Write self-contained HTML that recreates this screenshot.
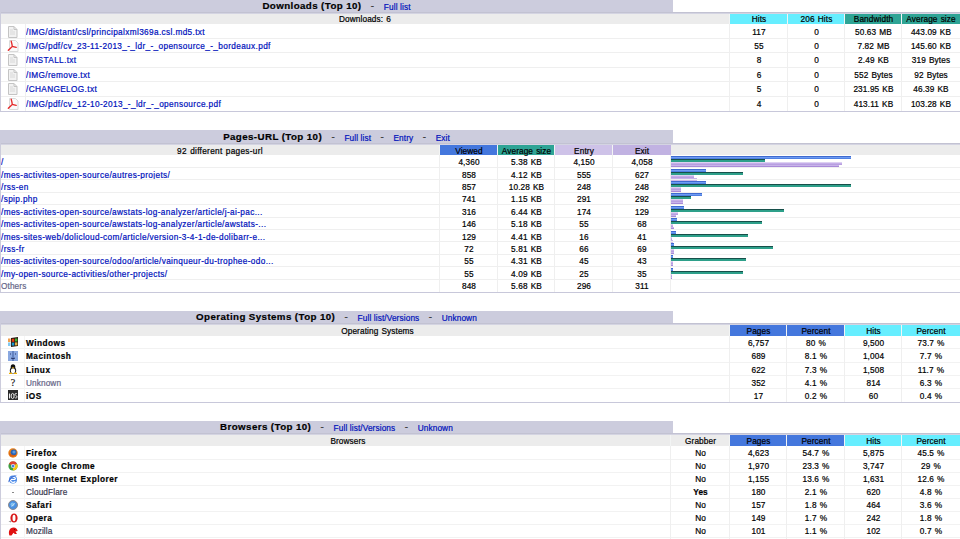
<!DOCTYPE html><html><head><meta charset="utf-8"><style>
html,body{margin:0;padding:0;background:#fff;width:960px;height:539px;overflow:hidden;position:relative;}
body{font-family:"Liberation Sans",sans-serif;font-size:8.25px;color:#000;-webkit-text-stroke:0.2px;}
.r{position:absolute;}
.t{position:absolute;white-space:nowrap;text-align:center;letter-spacing:0.1px;word-spacing:0.7px;}
.p{letter-spacing:0.36px;color:#0011BB;word-spacing:0;}
.b{letter-spacing:0.5px;}
.w{letter-spacing:0.3px;}
.ti{font-size:9.75px;font-weight:bold;letter-spacing:0.4px;word-spacing:0;}
.ti i{font-style:normal;font-weight:normal;color:#333;font-size:9.75px;}
.ti span{font-weight:normal;font-size:8.25px;letter-spacing:0.12px;color:#0011BB;vertical-align:-1px;}
svg{position:absolute;}
</style></head><body>
<div class="r" style="left:0px;top:-1px;width:673px;height:13px;background:#CCCCDD;"></div>
<div class="t ti" style="left:0px;top:-1px;width:673px;height:13px;line-height:13px;">Downloads (Top 10) &nbsp; <i>-</i> &nbsp; <span>Full list</span></div>
<div class="r" style="left:0px;top:12px;width:960px;height:1px;background:#C2C2D2;"></div>
<div class="r" style="left:0px;top:13px;width:960px;height:1px;background:#D4D4E2;"></div>
<div class="r" style="left:1px;top:14px;width:959px;height:10px;background:#ECECEC;"></div>
<div class="r" style="left:730px;top:14px;width:58px;height:10px;background:#66EEFF;"></div>
<div class="t" style="left:730px;top:15.0px;width:58px;height:10px;line-height:10px;">Hits</div>
<div class="r" style="left:788px;top:14px;width:57px;height:10px;background:#66EEFF;"></div>
<div class="t" style="left:788px;top:15.0px;width:57px;height:10px;line-height:10px;">206 Hits</div>
<div class="r" style="left:845px;top:14px;width:57px;height:10px;background:#2EA495;"></div>
<div class="t" style="left:845px;top:15.0px;width:57px;height:10px;line-height:10px;">Bandwidth</div>
<div class="r" style="left:902px;top:14px;width:58px;height:10px;background:#2EA495;"></div>
<div class="t" style="left:902px;top:15.0px;width:58px;height:10px;line-height:10px;">Average size</div>
<div class="r" style="left:729px;top:14px;width:1px;height:10px;background:#F2F4F4;"></div>
<div class="r" style="left:787px;top:14px;width:1px;height:10px;background:#F2F4F4;"></div>
<div class="r" style="left:844px;top:14px;width:1px;height:10px;background:#F2F4F4;"></div>
<div class="r" style="left:901px;top:14px;width:1px;height:10px;background:#F2F4F4;"></div>
<div class="t" style="left:0px;top:15.0px;width:730px;height:10px;line-height:10px;">Downloads: 6</div>
<svg style="left:7px;top:26px" width="11" height="12" viewBox="0 0 11 12"><path d="M1.5 0.5h5.5l3 3v8h-8.5z" fill="#f2f2f2" stroke="#c4c4c4"/><path d="M7 0.5v3h3" fill="none" stroke="#c4c4c4"/><path d="M3 4h3M3 6h5M3 8h5" stroke="#d8d8d8"/></svg>
<div class="t p" style="left:26px;top:25.5px;width:674px;height:14.45px;line-height:14.45px;text-align:left;">/IMG/distant/csl/principalxml369a.csl.md5.txt</div>
<div class="t" style="left:730px;top:25.5px;width:58px;height:14.45px;line-height:14.45px;">117</div>
<div class="t" style="left:788px;top:25.5px;width:57px;height:14.45px;line-height:14.45px;">0</div>
<div class="t" style="left:845px;top:25.5px;width:57px;height:14.45px;line-height:14.45px;">50.63 MB</div>
<div class="t" style="left:902px;top:25.5px;width:58px;height:14.45px;line-height:14.45px;">443.09 KB</div>
<div class="r" style="left:1px;top:37.95px;width:959px;height:1px;background:#EFEFEF;"></div>
<svg style="left:7px;top:40px" width="12" height="12" viewBox="0 0 12 12"><path d="M2.5 0.5h6l2.5 2.5v8.5h-8.5z" fill="#fafafa" stroke="#dadada"/><path d="M4.2 1.2Q5 4 5.3 6.4Q3.6 8.2 1.3 10.3M5.3 6.4Q7 7 9.2 7.4" stroke="#e42828" stroke-width="1.3" fill="none" stroke-linecap="round"/></svg>
<div class="t p" style="left:26px;top:39.95px;width:674px;height:14.45px;line-height:14.45px;text-align:left;">/IMG/pdf/cv_23-11-2013_-_ldr_-_opensource_-_bordeaux.pdf</div>
<div class="t" style="left:730px;top:39.95px;width:58px;height:14.45px;line-height:14.45px;">55</div>
<div class="t" style="left:788px;top:39.95px;width:57px;height:14.45px;line-height:14.45px;">0</div>
<div class="t" style="left:845px;top:39.95px;width:57px;height:14.45px;line-height:14.45px;">7.82 MB</div>
<div class="t" style="left:902px;top:39.95px;width:58px;height:14.45px;line-height:14.45px;">145.60 KB</div>
<div class="r" style="left:1px;top:52.400000000000006px;width:959px;height:1px;background:#EFEFEF;"></div>
<svg style="left:7px;top:54px" width="11" height="12" viewBox="0 0 11 12"><path d="M1.5 0.5h5.5l3 3v8h-8.5z" fill="#f2f2f2" stroke="#c4c4c4"/><path d="M7 0.5v3h3" fill="none" stroke="#c4c4c4"/><path d="M3 4h3M3 6h5M3 8h5" stroke="#d8d8d8"/></svg>
<div class="t p" style="left:26px;top:54.4px;width:674px;height:14.45px;line-height:14.45px;text-align:left;">/INSTALL.txt</div>
<div class="t" style="left:730px;top:54.4px;width:58px;height:14.45px;line-height:14.45px;">8</div>
<div class="t" style="left:788px;top:54.4px;width:57px;height:14.45px;line-height:14.45px;">0</div>
<div class="t" style="left:845px;top:54.4px;width:57px;height:14.45px;line-height:14.45px;">2.49 KB</div>
<div class="t" style="left:902px;top:54.4px;width:58px;height:14.45px;line-height:14.45px;">319 Bytes</div>
<div class="r" style="left:1px;top:66.85px;width:959px;height:1px;background:#EFEFEF;"></div>
<svg style="left:7px;top:69px" width="11" height="12" viewBox="0 0 11 12"><path d="M1.5 0.5h5.5l3 3v8h-8.5z" fill="#f2f2f2" stroke="#c4c4c4"/><path d="M7 0.5v3h3" fill="none" stroke="#c4c4c4"/><path d="M3 4h3M3 6h5M3 8h5" stroke="#d8d8d8"/></svg>
<div class="t p" style="left:26px;top:68.85px;width:674px;height:14.45px;line-height:14.45px;text-align:left;">/IMG/remove.txt</div>
<div class="t" style="left:730px;top:68.85px;width:58px;height:14.45px;line-height:14.45px;">6</div>
<div class="t" style="left:788px;top:68.85px;width:57px;height:14.45px;line-height:14.45px;">0</div>
<div class="t" style="left:845px;top:68.85px;width:57px;height:14.45px;line-height:14.45px;">552 Bytes</div>
<div class="t" style="left:902px;top:68.85px;width:58px;height:14.45px;line-height:14.45px;">92 Bytes</div>
<div class="r" style="left:1px;top:81.3px;width:959px;height:1px;background:#EFEFEF;"></div>
<svg style="left:7px;top:83px" width="11" height="12" viewBox="0 0 11 12"><path d="M1.5 0.5h5.5l3 3v8h-8.5z" fill="#f2f2f2" stroke="#c4c4c4"/><path d="M7 0.5v3h3" fill="none" stroke="#c4c4c4"/><path d="M3 4h3M3 6h5M3 8h5" stroke="#d8d8d8"/></svg>
<div class="t p" style="left:26px;top:83.3px;width:674px;height:14.45px;line-height:14.45px;text-align:left;">/CHANGELOG.txt</div>
<div class="t" style="left:730px;top:83.3px;width:58px;height:14.45px;line-height:14.45px;">5</div>
<div class="t" style="left:788px;top:83.3px;width:57px;height:14.45px;line-height:14.45px;">0</div>
<div class="t" style="left:845px;top:83.3px;width:57px;height:14.45px;line-height:14.45px;">231.95 KB</div>
<div class="t" style="left:902px;top:83.3px;width:58px;height:14.45px;line-height:14.45px;">46.39 KB</div>
<div class="r" style="left:1px;top:95.75px;width:959px;height:1px;background:#EFEFEF;"></div>
<svg style="left:7px;top:98px" width="12" height="12" viewBox="0 0 12 12"><path d="M2.5 0.5h6l2.5 2.5v8.5h-8.5z" fill="#fafafa" stroke="#dadada"/><path d="M4.2 1.2Q5 4 5.3 6.4Q3.6 8.2 1.3 10.3M5.3 6.4Q7 7 9.2 7.4" stroke="#e42828" stroke-width="1.3" fill="none" stroke-linecap="round"/></svg>
<div class="t p" style="left:26px;top:97.75px;width:674px;height:14.45px;line-height:14.45px;text-align:left;">/IMG/pdf/cv_12-10-2013_-_ldr_-_opensource.pdf</div>
<div class="t" style="left:730px;top:97.75px;width:58px;height:14.45px;line-height:14.45px;">4</div>
<div class="t" style="left:788px;top:97.75px;width:57px;height:14.45px;line-height:14.45px;">0</div>
<div class="t" style="left:845px;top:97.75px;width:57px;height:14.45px;line-height:14.45px;">413.11 KB</div>
<div class="t" style="left:902px;top:97.75px;width:58px;height:14.45px;line-height:14.45px;">103.28 KB</div>
<div class="r" style="left:729px;top:24px;width:1px;height:87px;background:#EFEFEF;"></div>
<div class="r" style="left:787px;top:24px;width:1px;height:87px;background:#EFEFEF;"></div>
<div class="r" style="left:844px;top:24px;width:1px;height:87px;background:#EFEFEF;"></div>
<div class="r" style="left:901px;top:24px;width:1px;height:87px;background:#EFEFEF;"></div>
<div class="r" style="left:25px;top:24px;width:1px;height:87px;background:#EFEFEF;"></div>
<div class="r" style="left:0px;top:12px;width:1px;height:99px;background:#CCCCDC;"></div>
<div class="r" style="left:0px;top:111px;width:960px;height:1px;background:#C8C8DA;"></div>
<div class="r" style="left:0px;top:130.4px;width:673px;height:12.900000000000006px;background:#CCCCDD;"></div>
<div class="t ti" style="left:0px;top:131.2px;width:673px;height:12.900000000000006px;line-height:12.900000000000006px;">Pages-URL (Top 10) &nbsp; <i>-</i> &nbsp; <span>Full list</span> &nbsp; <i>-</i> &nbsp; <span>Entry</span> &nbsp; <i>-</i> &nbsp; <span>Exit</span></div>
<div class="r" style="left:0px;top:143.3px;width:960px;height:1px;background:#C2C2D2;"></div>
<div class="r" style="left:0px;top:144.3px;width:960px;height:0.6999999999999886px;background:#D4D4E2;"></div>
<div class="r" style="left:1px;top:145px;width:959px;height:10.099999999999994px;background:#ECECEC;"></div>
<div class="r" style="left:440px;top:145px;width:58px;height:10.099999999999994px;background:#4477DD;"></div>
<div class="t" style="left:440px;top:146.5px;width:58px;height:10.099999999999994px;line-height:10.099999999999994px;">Viewed</div>
<div class="r" style="left:498px;top:145px;width:57px;height:10.099999999999994px;background:#2EA495;"></div>
<div class="t" style="left:498px;top:146.5px;width:57px;height:10.099999999999994px;line-height:10.099999999999994px;">Average size</div>
<div class="r" style="left:555px;top:145px;width:58px;height:10.099999999999994px;background:#CEC2E8;"></div>
<div class="t" style="left:555px;top:146.5px;width:58px;height:10.099999999999994px;line-height:10.099999999999994px;">Entry</div>
<div class="r" style="left:613px;top:145px;width:58px;height:10.099999999999994px;background:#C1B2E2;"></div>
<div class="t" style="left:613px;top:146.5px;width:58px;height:10.099999999999994px;line-height:10.099999999999994px;">Exit</div>
<div class="r" style="left:439px;top:145px;width:1px;height:10.099999999999994px;background:#F2F4F4;"></div>
<div class="r" style="left:497px;top:145px;width:1px;height:10.099999999999994px;background:#F2F4F4;"></div>
<div class="r" style="left:554px;top:145px;width:1px;height:10.099999999999994px;background:#F2F4F4;"></div>
<div class="r" style="left:612px;top:145px;width:1px;height:10.099999999999994px;background:#F2F4F4;"></div>
<div class="t w" style="left:0px;top:146.5px;width:440px;height:10.099999999999994px;line-height:10.099999999999994px;">92 different pages-url</div>
<div class="t p" style="left:1px;top:157.1px;width:439px;height:12.41px;line-height:12.41px;text-align:left;">/</div>
<div class="t" style="left:440px;top:157.1px;width:58px;height:12.41px;line-height:12.41px;">4,360</div>
<div class="t" style="left:498px;top:157.1px;width:57px;height:12.41px;line-height:12.41px;">5.38 KB</div>
<div class="t" style="left:555px;top:157.1px;width:58px;height:12.41px;line-height:12.41px;">4,150</div>
<div class="t" style="left:613px;top:157.1px;width:58px;height:12.41px;line-height:12.41px;">4,058</div>
<div class="r" style="left:671px;top:156px;width:180px;height:3px;background:linear-gradient(#3f6ad0 0,#3f6ad0 1px,#6e9cf2 1px,#6e9cf2 2px,#4f80e2 2px);"></div>
<div class="r" style="left:671px;top:159px;width:94px;height:3px;background:linear-gradient(#17504a 0,#17504a 1px,#2ea08a 1px);"></div>
<div class="r" style="left:671px;top:162px;width:171px;height:3px;background:linear-gradient(#ddd0f2 0,#ddd0f2 1px,#c4aee8 1px,#c4aee8 2px,#b89fe0 2px);"></div>
<div class="r" style="left:671px;top:165px;width:168px;height:3px;background:linear-gradient(#c8b4ea 0,#c8b4ea 1px,#a98ad8 1px,#a98ad8 2px,#cdbbea 2px);"></div>
<div class="r" style="left:1px;top:167.01px;width:959px;height:1px;background:#EFEFEF;"></div>
<div class="t p" style="left:1px;top:169.51px;width:439px;height:12.41px;line-height:12.41px;text-align:left;">/mes-activites-open-source/autres-projets/</div>
<div class="t" style="left:440px;top:169.51px;width:58px;height:12.41px;line-height:12.41px;">858</div>
<div class="t" style="left:498px;top:169.51px;width:57px;height:12.41px;line-height:12.41px;">4.12 KB</div>
<div class="t" style="left:555px;top:169.51px;width:58px;height:12.41px;line-height:12.41px;">555</div>
<div class="t" style="left:613px;top:169.51px;width:58px;height:12.41px;line-height:12.41px;">627</div>
<div class="r" style="left:671px;top:169px;width:35px;height:3px;background:linear-gradient(#3f6ad0 0,#3f6ad0 1px,#6e9cf2 1px,#6e9cf2 2px,#4f80e2 2px);"></div>
<div class="r" style="left:671px;top:172px;width:72px;height:3px;background:linear-gradient(#17504a 0,#17504a 1px,#2ea08a 1px);"></div>
<div class="r" style="left:671px;top:175px;width:23px;height:3px;background:linear-gradient(#ddd0f2 0,#ddd0f2 1px,#c4aee8 1px,#c4aee8 2px,#b89fe0 2px);"></div>
<div class="r" style="left:671px;top:178px;width:26px;height:3px;background:linear-gradient(#c8b4ea 0,#c8b4ea 1px,#a98ad8 1px,#a98ad8 2px,#cdbbea 2px);"></div>
<div class="r" style="left:1px;top:179.42px;width:959px;height:1px;background:#EFEFEF;"></div>
<div class="t p" style="left:1px;top:181.92px;width:439px;height:12.41px;line-height:12.41px;text-align:left;">/rss-en</div>
<div class="t" style="left:440px;top:181.92px;width:58px;height:12.41px;line-height:12.41px;">857</div>
<div class="t" style="left:498px;top:181.92px;width:57px;height:12.41px;line-height:12.41px;">10.28 KB</div>
<div class="t" style="left:555px;top:181.92px;width:58px;height:12.41px;line-height:12.41px;">248</div>
<div class="t" style="left:613px;top:181.92px;width:58px;height:12.41px;line-height:12.41px;">248</div>
<div class="r" style="left:671px;top:181px;width:35px;height:3px;background:linear-gradient(#3f6ad0 0,#3f6ad0 1px,#6e9cf2 1px,#6e9cf2 2px,#4f80e2 2px);"></div>
<div class="r" style="left:671px;top:184px;width:180px;height:3px;background:linear-gradient(#17504a 0,#17504a 1px,#2ea08a 1px);"></div>
<div class="r" style="left:671px;top:187px;width:10px;height:3px;background:linear-gradient(#ddd0f2 0,#ddd0f2 1px,#c4aee8 1px,#c4aee8 2px,#b89fe0 2px);"></div>
<div class="r" style="left:671px;top:190px;width:10px;height:3px;background:linear-gradient(#c8b4ea 0,#c8b4ea 1px,#a98ad8 1px,#a98ad8 2px,#cdbbea 2px);"></div>
<div class="r" style="left:1px;top:191.82999999999998px;width:959px;height:1px;background:#EFEFEF;"></div>
<div class="t p" style="left:1px;top:194.33px;width:439px;height:12.41px;line-height:12.41px;text-align:left;">/spip.php</div>
<div class="t" style="left:440px;top:194.33px;width:58px;height:12.41px;line-height:12.41px;">741</div>
<div class="t" style="left:498px;top:194.33px;width:57px;height:12.41px;line-height:12.41px;">1.15 KB</div>
<div class="t" style="left:555px;top:194.33px;width:58px;height:12.41px;line-height:12.41px;">291</div>
<div class="t" style="left:613px;top:194.33px;width:58px;height:12.41px;line-height:12.41px;">292</div>
<div class="r" style="left:671px;top:193px;width:31px;height:3px;background:linear-gradient(#3f6ad0 0,#3f6ad0 1px,#6e9cf2 1px,#6e9cf2 2px,#4f80e2 2px);"></div>
<div class="r" style="left:671px;top:196px;width:20px;height:3px;background:linear-gradient(#17504a 0,#17504a 1px,#2ea08a 1px);"></div>
<div class="r" style="left:671px;top:199px;width:12px;height:3px;background:linear-gradient(#ddd0f2 0,#ddd0f2 1px,#c4aee8 1px,#c4aee8 2px,#b89fe0 2px);"></div>
<div class="r" style="left:671px;top:202px;width:12px;height:3px;background:linear-gradient(#c8b4ea 0,#c8b4ea 1px,#a98ad8 1px,#a98ad8 2px,#cdbbea 2px);"></div>
<div class="r" style="left:1px;top:204.23999999999998px;width:959px;height:1px;background:#EFEFEF;"></div>
<div class="t p" style="left:1px;top:206.74px;width:439px;height:12.41px;line-height:12.41px;text-align:left;">/mes-activites-open-source/awstats-log-analyzer/article/j-ai-pac...</div>
<div class="t" style="left:440px;top:206.74px;width:58px;height:12.41px;line-height:12.41px;">316</div>
<div class="t" style="left:498px;top:206.74px;width:57px;height:12.41px;line-height:12.41px;">6.44 KB</div>
<div class="t" style="left:555px;top:206.74px;width:58px;height:12.41px;line-height:12.41px;">174</div>
<div class="t" style="left:613px;top:206.74px;width:58px;height:12.41px;line-height:12.41px;">129</div>
<div class="r" style="left:671px;top:206px;width:13px;height:3px;background:linear-gradient(#3f6ad0 0,#3f6ad0 1px,#6e9cf2 1px,#6e9cf2 2px,#4f80e2 2px);"></div>
<div class="r" style="left:671px;top:209px;width:113px;height:3px;background:linear-gradient(#17504a 0,#17504a 1px,#2ea08a 1px);"></div>
<div class="r" style="left:671px;top:212px;width:7px;height:3px;background:linear-gradient(#ddd0f2 0,#ddd0f2 1px,#c4aee8 1px,#c4aee8 2px,#b89fe0 2px);"></div>
<div class="r" style="left:671px;top:215px;width:5px;height:3px;background:linear-gradient(#c8b4ea 0,#c8b4ea 1px,#a98ad8 1px,#a98ad8 2px,#cdbbea 2px);"></div>
<div class="r" style="left:1px;top:216.65px;width:959px;height:1px;background:#EFEFEF;"></div>
<div class="t p" style="left:1px;top:219.15px;width:439px;height:12.41px;line-height:12.41px;text-align:left;">/mes-activites-open-source/awstats-log-analyzer/article/awstats-...</div>
<div class="t" style="left:440px;top:219.15px;width:58px;height:12.41px;line-height:12.41px;">146</div>
<div class="t" style="left:498px;top:219.15px;width:57px;height:12.41px;line-height:12.41px;">5.18 KB</div>
<div class="t" style="left:555px;top:219.15px;width:58px;height:12.41px;line-height:12.41px;">55</div>
<div class="t" style="left:613px;top:219.15px;width:58px;height:12.41px;line-height:12.41px;">68</div>
<div class="r" style="left:671px;top:218px;width:6px;height:3px;background:linear-gradient(#3f6ad0 0,#3f6ad0 1px,#6e9cf2 1px,#6e9cf2 2px,#4f80e2 2px);"></div>
<div class="r" style="left:671px;top:221px;width:91px;height:3px;background:linear-gradient(#17504a 0,#17504a 1px,#2ea08a 1px);"></div>
<div class="r" style="left:671px;top:224px;width:2px;height:3px;background:linear-gradient(#ddd0f2 0,#ddd0f2 1px,#c4aee8 1px,#c4aee8 2px,#b89fe0 2px);"></div>
<div class="r" style="left:671px;top:227px;width:3px;height:3px;background:linear-gradient(#c8b4ea 0,#c8b4ea 1px,#a98ad8 1px,#a98ad8 2px,#cdbbea 2px);"></div>
<div class="r" style="left:1px;top:229.05999999999997px;width:959px;height:1px;background:#EFEFEF;"></div>
<div class="t p" style="left:1px;top:231.56px;width:439px;height:12.41px;line-height:12.41px;text-align:left;">/mes-sites-web/dolicloud-com/article/version-3-4-1-de-dolibarr-e...</div>
<div class="t" style="left:440px;top:231.56px;width:58px;height:12.41px;line-height:12.41px;">129</div>
<div class="t" style="left:498px;top:231.56px;width:57px;height:12.41px;line-height:12.41px;">4.41 KB</div>
<div class="t" style="left:555px;top:231.56px;width:58px;height:12.41px;line-height:12.41px;">16</div>
<div class="t" style="left:613px;top:231.56px;width:58px;height:12.41px;line-height:12.41px;">41</div>
<div class="r" style="left:671px;top:231px;width:5px;height:3px;background:linear-gradient(#3f6ad0 0,#3f6ad0 1px,#6e9cf2 1px,#6e9cf2 2px,#4f80e2 2px);"></div>
<div class="r" style="left:671px;top:234px;width:77px;height:3px;background:linear-gradient(#17504a 0,#17504a 1px,#2ea08a 1px);"></div>
<div class="r" style="left:671px;top:237px;width:1px;height:3px;background:linear-gradient(#ddd0f2 0,#ddd0f2 1px,#c4aee8 1px,#c4aee8 2px,#b89fe0 2px);"></div>
<div class="r" style="left:671px;top:240px;width:2px;height:3px;background:linear-gradient(#c8b4ea 0,#c8b4ea 1px,#a98ad8 1px,#a98ad8 2px,#cdbbea 2px);"></div>
<div class="r" style="left:1px;top:241.47px;width:959px;height:1px;background:#EFEFEF;"></div>
<div class="t p" style="left:1px;top:243.97px;width:439px;height:12.41px;line-height:12.41px;text-align:left;">/rss-fr</div>
<div class="t" style="left:440px;top:243.97px;width:58px;height:12.41px;line-height:12.41px;">72</div>
<div class="t" style="left:498px;top:243.97px;width:57px;height:12.41px;line-height:12.41px;">5.81 KB</div>
<div class="t" style="left:555px;top:243.97px;width:58px;height:12.41px;line-height:12.41px;">66</div>
<div class="t" style="left:613px;top:243.97px;width:58px;height:12.41px;line-height:12.41px;">69</div>
<div class="r" style="left:671px;top:243px;width:3px;height:3px;background:linear-gradient(#3f6ad0 0,#3f6ad0 1px,#6e9cf2 1px,#6e9cf2 2px,#4f80e2 2px);"></div>
<div class="r" style="left:671px;top:246px;width:102px;height:3px;background:linear-gradient(#17504a 0,#17504a 1px,#2ea08a 1px);"></div>
<div class="r" style="left:671px;top:249px;width:3px;height:3px;background:linear-gradient(#ddd0f2 0,#ddd0f2 1px,#c4aee8 1px,#c4aee8 2px,#b89fe0 2px);"></div>
<div class="r" style="left:671px;top:252px;width:3px;height:3px;background:linear-gradient(#c8b4ea 0,#c8b4ea 1px,#a98ad8 1px,#a98ad8 2px,#cdbbea 2px);"></div>
<div class="r" style="left:1px;top:253.88px;width:959px;height:1px;background:#EFEFEF;"></div>
<div class="t p" style="left:1px;top:256.38px;width:439px;height:12.41px;line-height:12.41px;text-align:left;">/mes-activites-open-source/odoo/article/vainqueur-du-trophee-odo...</div>
<div class="t" style="left:440px;top:256.38px;width:58px;height:12.41px;line-height:12.41px;">55</div>
<div class="t" style="left:498px;top:256.38px;width:57px;height:12.41px;line-height:12.41px;">4.31 KB</div>
<div class="t" style="left:555px;top:256.38px;width:58px;height:12.41px;line-height:12.41px;">45</div>
<div class="t" style="left:613px;top:256.38px;width:58px;height:12.41px;line-height:12.41px;">43</div>
<div class="r" style="left:671px;top:255px;width:2px;height:3px;background:linear-gradient(#3f6ad0 0,#3f6ad0 1px,#6e9cf2 1px,#6e9cf2 2px,#4f80e2 2px);"></div>
<div class="r" style="left:671px;top:258px;width:75px;height:3px;background:linear-gradient(#17504a 0,#17504a 1px,#2ea08a 1px);"></div>
<div class="r" style="left:671px;top:261px;width:2px;height:3px;background:linear-gradient(#ddd0f2 0,#ddd0f2 1px,#c4aee8 1px,#c4aee8 2px,#b89fe0 2px);"></div>
<div class="r" style="left:671px;top:264px;width:2px;height:3px;background:linear-gradient(#c8b4ea 0,#c8b4ea 1px,#a98ad8 1px,#a98ad8 2px,#cdbbea 2px);"></div>
<div class="r" style="left:1px;top:266.29px;width:959px;height:1px;background:#EFEFEF;"></div>
<div class="t p" style="left:1px;top:268.79px;width:439px;height:12.41px;line-height:12.41px;text-align:left;">/my-open-source-activities/other-projects/</div>
<div class="t" style="left:440px;top:268.79px;width:58px;height:12.41px;line-height:12.41px;">55</div>
<div class="t" style="left:498px;top:268.79px;width:57px;height:12.41px;line-height:12.41px;">4.09 KB</div>
<div class="t" style="left:555px;top:268.79px;width:58px;height:12.41px;line-height:12.41px;">25</div>
<div class="t" style="left:613px;top:268.79px;width:58px;height:12.41px;line-height:12.41px;">35</div>
<div class="r" style="left:671px;top:268px;width:2px;height:3px;background:linear-gradient(#3f6ad0 0,#3f6ad0 1px,#6e9cf2 1px,#6e9cf2 2px,#4f80e2 2px);"></div>
<div class="r" style="left:671px;top:271px;width:72px;height:3px;background:linear-gradient(#17504a 0,#17504a 1px,#2ea08a 1px);"></div>
<div class="r" style="left:671px;top:274px;width:1px;height:3px;background:linear-gradient(#ddd0f2 0,#ddd0f2 1px,#c4aee8 1px,#c4aee8 2px,#b89fe0 2px);"></div>
<div class="r" style="left:671px;top:277px;width:1px;height:3px;background:linear-gradient(#c8b4ea 0,#c8b4ea 1px,#a98ad8 1px,#a98ad8 2px,#cdbbea 2px);"></div>
<div class="r" style="left:1px;top:278.7px;width:959px;height:1px;background:#EFEFEF;"></div>
<div class="t" style="left:1px;top:281.2px;width:439px;height:12.41px;line-height:12.41px;text-align:left;color:#666688;">Others</div>
<div class="t" style="left:440px;top:281.2px;width:58px;height:12.41px;line-height:12.41px;">848</div>
<div class="t" style="left:498px;top:281.2px;width:57px;height:12.41px;line-height:12.41px;">5.68 KB</div>
<div class="t" style="left:555px;top:281.2px;width:58px;height:12.41px;line-height:12.41px;">296</div>
<div class="t" style="left:613px;top:281.2px;width:58px;height:12.41px;line-height:12.41px;">311</div>
<div class="r" style="left:439px;top:155.1px;width:1px;height:136.50000000000003px;background:#EFEFEF;"></div>
<div class="r" style="left:497px;top:155.1px;width:1px;height:136.50000000000003px;background:#EFEFEF;"></div>
<div class="r" style="left:554px;top:155.1px;width:1px;height:136.50000000000003px;background:#EFEFEF;"></div>
<div class="r" style="left:612px;top:155.1px;width:1px;height:136.50000000000003px;background:#EFEFEF;"></div>
<div class="r" style="left:670px;top:155.1px;width:1px;height:136.50000000000003px;background:#EFEFEF;"></div>
<div class="r" style="left:0px;top:143.3px;width:1px;height:148.3px;background:#CCCCDC;"></div>
<div class="r" style="left:0px;top:291.6px;width:960px;height:1px;background:#C8C8DA;"></div>
<div class="r" style="left:0px;top:311px;width:673px;height:12.300000000000011px;background:#CCCCDD;"></div>
<div class="t ti" style="left:0px;top:311px;width:673px;height:12.300000000000011px;line-height:12.300000000000011px;">Operating Systems (Top 10) &nbsp; <i>-</i> &nbsp; <span>Full list/Versions</span> &nbsp; <i>-</i> &nbsp; <span>Unknown</span></div>
<div class="r" style="left:0px;top:323.3px;width:960px;height:1px;background:#C2C2D2;"></div>
<div class="r" style="left:0px;top:324.3px;width:960px;height:1.0px;background:#D4D4E2;"></div>
<div class="r" style="left:1px;top:325.3px;width:959px;height:10.300000000000011px;background:#ECECEC;"></div>
<div class="r" style="left:730px;top:325.3px;width:57px;height:10.300000000000011px;background:#4477DD;"></div>
<div class="t" style="left:730px;top:326.6px;width:57px;height:10.300000000000011px;line-height:10.300000000000011px;">Pages</div>
<div class="r" style="left:787px;top:325.3px;width:58px;height:10.300000000000011px;background:#4477DD;"></div>
<div class="t" style="left:787px;top:326.6px;width:58px;height:10.300000000000011px;line-height:10.300000000000011px;">Percent</div>
<div class="r" style="left:845px;top:325.3px;width:57px;height:10.300000000000011px;background:#66EEFF;"></div>
<div class="t" style="left:845px;top:326.6px;width:57px;height:10.300000000000011px;line-height:10.300000000000011px;">Hits</div>
<div class="r" style="left:902px;top:325.3px;width:58px;height:10.300000000000011px;background:#66EEFF;"></div>
<div class="t" style="left:902px;top:326.6px;width:58px;height:10.300000000000011px;line-height:10.300000000000011px;">Percent</div>
<div class="r" style="left:729px;top:325.3px;width:1px;height:10.300000000000011px;background:#F2F4F4;"></div>
<div class="r" style="left:786px;top:325.3px;width:1px;height:10.300000000000011px;background:#F2F4F4;"></div>
<div class="r" style="left:844px;top:325.3px;width:1px;height:10.300000000000011px;background:#F2F4F4;"></div>
<div class="r" style="left:901px;top:325.3px;width:1px;height:10.300000000000011px;background:#F2F4F4;"></div>
<div class="t" style="left:25px;top:326.6px;width:705px;height:10.300000000000011px;line-height:10.300000000000011px;">Operating Systems</div>
<div class="t b" style="left:26px;top:337.2px;width:674px;height:13.2px;line-height:13.2px;text-align:left;font-weight:bold;">Windows</div>
<div class="t" style="left:730px;top:337.2px;width:57px;height:13.2px;line-height:13.2px;">6,757</div>
<div class="t" style="left:787px;top:337.2px;width:58px;height:13.2px;line-height:13.2px;">80 %</div>
<div class="t" style="left:845px;top:337.2px;width:57px;height:13.2px;line-height:13.2px;">9,500</div>
<div class="t" style="left:902px;top:337.2px;width:58px;height:13.2px;line-height:13.2px;">73.7 %</div>
<svg style="left:8px;top:337px" width="10" height="10" viewBox="0 0 10 10"><path d="M3 1L10 0V9L3 10z" fill="#2a1a10"/><rect x="0" y="1.5" width="2.6" height="3.5" fill="#f0a050"/><rect x="0" y="5.5" width="2.6" height="3.5" fill="#80c8f0"/><rect x="3.8" y="1.8" width="2.5" height="3" fill="#e83a10"/><rect x="7" y="1.5" width="2.4" height="3" fill="#40b030"/><rect x="3.8" y="5.6" width="2.5" height="3" fill="#1a9ad0"/><rect x="7" y="5.4" width="2.4" height="3" fill="#e0b040"/></svg>
<div class="r" style="left:1px;top:348.3px;width:959px;height:1px;background:#F2F2F2;"></div>
<div class="t b" style="left:26px;top:350.4px;width:674px;height:13.2px;line-height:13.2px;text-align:left;font-weight:bold;">Macintosh</div>
<div class="t" style="left:730px;top:350.4px;width:57px;height:13.2px;line-height:13.2px;">689</div>
<div class="t" style="left:787px;top:350.4px;width:58px;height:13.2px;line-height:13.2px;">8.1 %</div>
<div class="t" style="left:845px;top:350.4px;width:57px;height:13.2px;line-height:13.2px;">1,004</div>
<div class="t" style="left:902px;top:350.4px;width:58px;height:13.2px;line-height:13.2px;">7.7 %</div>
<svg style="left:8px;top:351px" width="10" height="10" viewBox="0 0 10 10"><rect x="0" y="0" width="10" height="10" fill="#8aa8e0"/><path d="M5 0v10" stroke="#3a5aa0"/><path d="M2 3h1M7 3h1M3 7q2 1.5 4 0" stroke="#2a3a70"/></svg>
<div class="r" style="left:1px;top:361.5px;width:959px;height:1px;background:#F2F2F2;"></div>
<div class="t b" style="left:26px;top:363.6px;width:674px;height:13.2px;line-height:13.2px;text-align:left;font-weight:bold;">Linux</div>
<div class="t" style="left:730px;top:363.6px;width:57px;height:13.2px;line-height:13.2px;">622</div>
<div class="t" style="left:787px;top:363.6px;width:58px;height:13.2px;line-height:13.2px;">7.3 %</div>
<div class="t" style="left:845px;top:363.6px;width:57px;height:13.2px;line-height:13.2px;">1,508</div>
<div class="t" style="left:902px;top:363.6px;width:58px;height:13.2px;line-height:13.2px;">11.7 %</div>
<svg style="left:8px;top:364px" width="10" height="10" viewBox="0 0 10 10"><ellipse cx="5" cy="3" rx="2.3" ry="2.8" fill="#111"/><ellipse cx="5" cy="6.5" rx="3.2" ry="3.3" fill="#222"/><ellipse cx="5" cy="6.8" rx="2.2" ry="2.6" fill="#fff"/><path d="M1 9.5h3M6 9.5h3" stroke="#f0b000" stroke-width="1.3"/><path d="M4.2 3.8h1.6" stroke="#f0b000"/></svg>
<div class="r" style="left:1px;top:374.7px;width:959px;height:1px;background:#F2F2F2;"></div>
<div class="t" style="left:26px;top:376.8px;width:674px;height:13.2px;line-height:13.2px;text-align:left;color:#666688;">Unknown</div>
<div class="t" style="left:730px;top:376.8px;width:57px;height:13.2px;line-height:13.2px;">352</div>
<div class="t" style="left:787px;top:376.8px;width:58px;height:13.2px;line-height:13.2px;">4.1 %</div>
<div class="t" style="left:845px;top:376.8px;width:57px;height:13.2px;line-height:13.2px;">814</div>
<div class="t" style="left:902px;top:376.8px;width:58px;height:13.2px;line-height:13.2px;">6.3 %</div>
<div class="t" style="left:8px;top:376.20000000000005px;width:10px;height:13.2px;line-height:13.2px;font-size:10px;font-family:Liberation Serif,serif;color:#222">?</div>
<div class="r" style="left:1px;top:387.90000000000003px;width:959px;height:1px;background:#F2F2F2;"></div>
<div class="t b" style="left:26px;top:390.0px;width:674px;height:13.2px;line-height:13.2px;text-align:left;font-weight:bold;">iOS</div>
<div class="t" style="left:730px;top:390.0px;width:57px;height:13.2px;line-height:13.2px;">17</div>
<div class="t" style="left:787px;top:390.0px;width:58px;height:13.2px;line-height:13.2px;">0.2 %</div>
<div class="t" style="left:845px;top:390.0px;width:57px;height:13.2px;line-height:13.2px;">60</div>
<div class="t" style="left:902px;top:390.0px;width:58px;height:13.2px;line-height:13.2px;">0.4 %</div>
<svg style="left:8px;top:390px" width="10" height="10" viewBox="0 0 10 10"><rect x="0" y="0" width="10" height="10" fill="#2a2a2a"/><path d="M1.5 3.5v5" stroke="#eee" stroke-width="1.1"/><ellipse cx="4.6" cy="6" rx="1.5" ry="2.6" fill="none" stroke="#eee" stroke-width="1"/><path d="M9 3.8c-0.6-0.6-2-0.6-2.1 0.5c0 1.2 2.1 1 2.1 2.6c0 1.3-1.5 1.4-2.2 0.7" fill="none" stroke="#eee" stroke-width="0.9"/></svg>
<div class="r" style="left:729px;top:335.6px;width:1px;height:66.0px;background:#EFEFEF;"></div>
<div class="r" style="left:786px;top:335.6px;width:1px;height:66.0px;background:#EFEFEF;"></div>
<div class="r" style="left:844px;top:335.6px;width:1px;height:66.0px;background:#EFEFEF;"></div>
<div class="r" style="left:901px;top:335.6px;width:1px;height:66.0px;background:#EFEFEF;"></div>
<div class="r" style="left:24px;top:335.6px;width:1px;height:66.0px;background:#F5F5F5;"></div>
<div class="r" style="left:0px;top:323.3px;width:1px;height:78.30000000000001px;background:#CCCCDC;"></div>
<div class="r" style="left:0px;top:401.6px;width:960px;height:1px;background:#C8C8DA;"></div>
<div class="r" style="left:0px;top:421.1px;width:673px;height:12.199999999999989px;background:#CCCCDD;"></div>
<div class="t ti" style="left:0px;top:421.1px;width:673px;height:12.199999999999989px;line-height:12.199999999999989px;">Browsers (Top 10) &nbsp; <i>-</i> &nbsp; <span>Full list/Versions</span> &nbsp; <i>-</i> &nbsp; <span>Unknown</span></div>
<div class="r" style="left:0px;top:433.3px;width:960px;height:1px;background:#C2C2D2;"></div>
<div class="r" style="left:0px;top:434.3px;width:960px;height:1.099999999999966px;background:#D4D4E2;"></div>
<div class="r" style="left:1px;top:435.4px;width:959px;height:10.800000000000011px;background:#ECECEC;"></div>
<div class="r" style="left:671px;top:435.4px;width:59px;height:10.800000000000011px;background:#ECECEC;"></div>
<div class="t" style="left:671px;top:437.2px;width:59px;height:10.800000000000011px;line-height:10.800000000000011px;">Grabber</div>
<div class="r" style="left:730px;top:435.4px;width:57px;height:10.800000000000011px;background:#4477DD;"></div>
<div class="t" style="left:730px;top:437.2px;width:57px;height:10.800000000000011px;line-height:10.800000000000011px;">Pages</div>
<div class="r" style="left:787px;top:435.4px;width:58px;height:10.800000000000011px;background:#4477DD;"></div>
<div class="t" style="left:787px;top:437.2px;width:58px;height:10.800000000000011px;line-height:10.800000000000011px;">Percent</div>
<div class="r" style="left:845px;top:435.4px;width:57px;height:10.800000000000011px;background:#66EEFF;"></div>
<div class="t" style="left:845px;top:437.2px;width:57px;height:10.800000000000011px;line-height:10.800000000000011px;">Hits</div>
<div class="r" style="left:902px;top:435.4px;width:58px;height:10.800000000000011px;background:#66EEFF;"></div>
<div class="t" style="left:902px;top:437.2px;width:58px;height:10.800000000000011px;line-height:10.800000000000011px;">Percent</div>
<div class="r" style="left:670px;top:435.4px;width:1px;height:10.800000000000011px;background:#F2F4F4;"></div>
<div class="r" style="left:729px;top:435.4px;width:1px;height:10.800000000000011px;background:#F2F4F4;"></div>
<div class="r" style="left:786px;top:435.4px;width:1px;height:10.800000000000011px;background:#F2F4F4;"></div>
<div class="r" style="left:844px;top:435.4px;width:1px;height:10.800000000000011px;background:#F2F4F4;"></div>
<div class="r" style="left:901px;top:435.4px;width:1px;height:10.800000000000011px;background:#F2F4F4;"></div>
<div class="t" style="left:25px;top:437.2px;width:646px;height:10.800000000000011px;line-height:10.800000000000011px;">Browsers</div>
<div class="t b" style="left:26px;top:447.2px;width:574px;height:13.03px;line-height:13.03px;text-align:left;font-weight:bold;">Firefox</div>
<div class="t" style="left:671px;top:447.2px;width:59px;height:13.03px;line-height:13.03px;">No</div>
<div class="t" style="left:730px;top:447.2px;width:57px;height:13.03px;line-height:13.03px;">4,623</div>
<div class="t" style="left:787px;top:447.2px;width:58px;height:13.03px;line-height:13.03px;">54.7 %</div>
<div class="t" style="left:845px;top:447.2px;width:57px;height:13.03px;line-height:13.03px;">5,875</div>
<div class="t" style="left:902px;top:447.2px;width:58px;height:13.03px;line-height:13.03px;">45.5 %</div>
<svg style="left:8px;top:448px" width="10" height="10" viewBox="0 0 10 10"><circle cx="5" cy="5" r="4.7" fill="#e8801a"/><circle cx="5.6" cy="4.4" r="3" fill="#2a60b0"/><circle cx="6" cy="4" r="1.6" fill="#5a9ae0"/><path d="M1 3.5C2 6.5 4.5 8 8.5 6.5C7 9 3 9.5 1.5 7z" fill="#d85a10"/></svg>
<div class="r" style="left:1px;top:458.72999999999996px;width:959px;height:1px;background:#F2F2F2;"></div>
<div class="t b" style="left:26px;top:460.23px;width:574px;height:13.03px;line-height:13.03px;text-align:left;font-weight:bold;">Google Chrome</div>
<div class="t" style="left:671px;top:460.23px;width:59px;height:13.03px;line-height:13.03px;">No</div>
<div class="t" style="left:730px;top:460.23px;width:57px;height:13.03px;line-height:13.03px;">1,970</div>
<div class="t" style="left:787px;top:460.23px;width:58px;height:13.03px;line-height:13.03px;">23.3 %</div>
<div class="t" style="left:845px;top:460.23px;width:57px;height:13.03px;line-height:13.03px;">3,747</div>
<div class="t" style="left:902px;top:460.23px;width:58px;height:13.03px;line-height:13.03px;">29 %</div>
<svg style="left:8px;top:461px" width="10" height="10" viewBox="0 0 10 10"><circle cx="5" cy="5" r="4.6" fill="#3ca040"/><path d="M5 5L1 2.7A4.6 4.6 0 0 1 9 2.7z" fill="#e04030"/><path d="M5 5L9 2.7A4.6 4.6 0 0 1 5 9.6z" fill="#f5c518"/><circle cx="5" cy="5" r="2" fill="#fff"/><circle cx="5" cy="5" r="1.5" fill="#4a80e0"/></svg>
<div class="r" style="left:1px;top:471.75999999999993px;width:959px;height:1px;background:#F2F2F2;"></div>
<div class="t b" style="left:26px;top:473.26px;width:574px;height:13.03px;line-height:13.03px;text-align:left;font-weight:bold;">MS Internet Explorer</div>
<div class="t" style="left:671px;top:473.26px;width:59px;height:13.03px;line-height:13.03px;">No</div>
<div class="t" style="left:730px;top:473.26px;width:57px;height:13.03px;line-height:13.03px;">1,155</div>
<div class="t" style="left:787px;top:473.26px;width:58px;height:13.03px;line-height:13.03px;">13.6 %</div>
<div class="t" style="left:845px;top:473.26px;width:57px;height:13.03px;line-height:13.03px;">1,631</div>
<div class="t" style="left:902px;top:473.26px;width:58px;height:13.03px;line-height:13.03px;">12.6 %</div>
<svg style="left:8px;top:474px" width="10" height="10" viewBox="0 0 10 10"><circle cx="5" cy="5.5" r="4" fill="#4a8ae8"/><path d="M2.5 5.5h5M7.3 7.3a2.6 2.6 0 1 1 0.3-2.3" fill="none" stroke="#fff" stroke-width="1.2"/><path d="M0.5 8.5C0 6 3 1.5 9.5 0.8C6 2 2.5 5 0.5 8.5z" fill="#3a6ad0"/></svg>
<div class="r" style="left:1px;top:484.78999999999996px;width:959px;height:1px;background:#F2F2F2;"></div>
<div class="t" style="left:26px;top:486.29px;width:574px;height:13.03px;line-height:13.03px;text-align:left;color:#3a3a50;">CloudFlare</div>
<div class="t" style="left:671px;top:486.29px;width:59px;height:13.03px;line-height:13.03px;"><b>Yes</b></div>
<div class="t" style="left:730px;top:486.29px;width:57px;height:13.03px;line-height:13.03px;">180</div>
<div class="t" style="left:787px;top:486.29px;width:58px;height:13.03px;line-height:13.03px;">2.1 %</div>
<div class="t" style="left:845px;top:486.29px;width:57px;height:13.03px;line-height:13.03px;">620</div>
<div class="t" style="left:902px;top:486.29px;width:58px;height:13.03px;line-height:13.03px;">4.8 %</div>
<div class="r" style="left:12px;top:492px;width:2px;height:1px;background:#888;"></div>
<div class="r" style="left:1px;top:497.81999999999994px;width:959px;height:1px;background:#F2F2F2;"></div>
<div class="t b" style="left:26px;top:499.32px;width:574px;height:13.03px;line-height:13.03px;text-align:left;font-weight:bold;">Safari</div>
<div class="t" style="left:671px;top:499.32px;width:59px;height:13.03px;line-height:13.03px;">No</div>
<div class="t" style="left:730px;top:499.32px;width:57px;height:13.03px;line-height:13.03px;">157</div>
<div class="t" style="left:787px;top:499.32px;width:58px;height:13.03px;line-height:13.03px;">1.8 %</div>
<div class="t" style="left:845px;top:499.32px;width:57px;height:13.03px;line-height:13.03px;">464</div>
<div class="t" style="left:902px;top:499.32px;width:58px;height:13.03px;line-height:13.03px;">3.6 %</div>
<svg style="left:8px;top:500px" width="10" height="10" viewBox="0 0 10 10"><circle cx="5" cy="5" r="4.5" fill="#4a90e0" stroke="#8a8a90" stroke-width="1"/><circle cx="4.5" cy="4.5" r="2" fill="#80c0f0"/><path d="M3.5 6.5L6.8 3.2" stroke="#e0e8f0" stroke-width="0.7"/></svg>
<div class="r" style="left:1px;top:510.84999999999997px;width:959px;height:1px;background:#F2F2F2;"></div>
<div class="t b" style="left:26px;top:512.35px;width:574px;height:13.03px;line-height:13.03px;text-align:left;font-weight:bold;">Opera</div>
<div class="t" style="left:671px;top:512.35px;width:59px;height:13.03px;line-height:13.03px;">No</div>
<div class="t" style="left:730px;top:512.35px;width:57px;height:13.03px;line-height:13.03px;">149</div>
<div class="t" style="left:787px;top:512.35px;width:58px;height:13.03px;line-height:13.03px;">1.7 %</div>
<div class="t" style="left:845px;top:512.35px;width:57px;height:13.03px;line-height:13.03px;">242</div>
<div class="t" style="left:902px;top:512.35px;width:58px;height:13.03px;line-height:13.03px;">1.8 %</div>
<svg style="left:8px;top:513px" width="10" height="10" viewBox="0 0 10 10"><path d="M3 7.5L0.5 8.5L3 9.5z" fill="#999"/><ellipse cx="6" cy="5" rx="3.6" ry="4.6" fill="#d81818"/><ellipse cx="6" cy="5" rx="1.5" ry="3.2" fill="#fff"/></svg>
<div class="r" style="left:1px;top:523.88px;width:959px;height:1px;background:#F2F2F2;"></div>
<div class="t" style="left:26px;top:525.38px;width:574px;height:13.03px;line-height:13.03px;text-align:left;color:#3a3a50;">Mozilla</div>
<div class="t" style="left:671px;top:525.38px;width:59px;height:13.03px;line-height:13.03px;">No</div>
<div class="t" style="left:730px;top:525.38px;width:57px;height:13.03px;line-height:13.03px;">101</div>
<div class="t" style="left:787px;top:525.38px;width:58px;height:13.03px;line-height:13.03px;">1.1 %</div>
<div class="t" style="left:845px;top:525.38px;width:57px;height:13.03px;line-height:13.03px;">102</div>
<div class="t" style="left:902px;top:525.38px;width:58px;height:13.03px;line-height:13.03px;">0.7 %</div>
<svg style="left:8px;top:526px" width="10" height="10" viewBox="0 0 10 10"><path d="M1.5 9.5C0 6 1.5 1.5 5.5 1.5c2.5 0 3.5 1.5 4.2 3.5L7.5 5.5l1.5 2.5H6.8L5.5 6.8 3.5 9.5z" fill="#e01010"/><path d="M6 3.5h1" stroke="#600" stroke-width="0.8"/></svg>
<div class="r" style="left:1px;top:536.91px;width:959px;height:1px;background:#F2F2F2;"></div>
<div class="r" style="left:670px;top:446.2px;width:1px;height:92.80000000000001px;background:#EFEFEF;"></div>
<div class="r" style="left:729px;top:446.2px;width:1px;height:92.80000000000001px;background:#EFEFEF;"></div>
<div class="r" style="left:786px;top:446.2px;width:1px;height:92.80000000000001px;background:#EFEFEF;"></div>
<div class="r" style="left:844px;top:446.2px;width:1px;height:92.80000000000001px;background:#EFEFEF;"></div>
<div class="r" style="left:901px;top:446.2px;width:1px;height:92.80000000000001px;background:#EFEFEF;"></div>
<div class="r" style="left:24px;top:446.2px;width:1px;height:92.80000000000001px;background:#F5F5F5;"></div>
<div class="r" style="left:0px;top:433.3px;width:1px;height:105.69999999999999px;background:#CCCCDC;"></div>
</body></html>
